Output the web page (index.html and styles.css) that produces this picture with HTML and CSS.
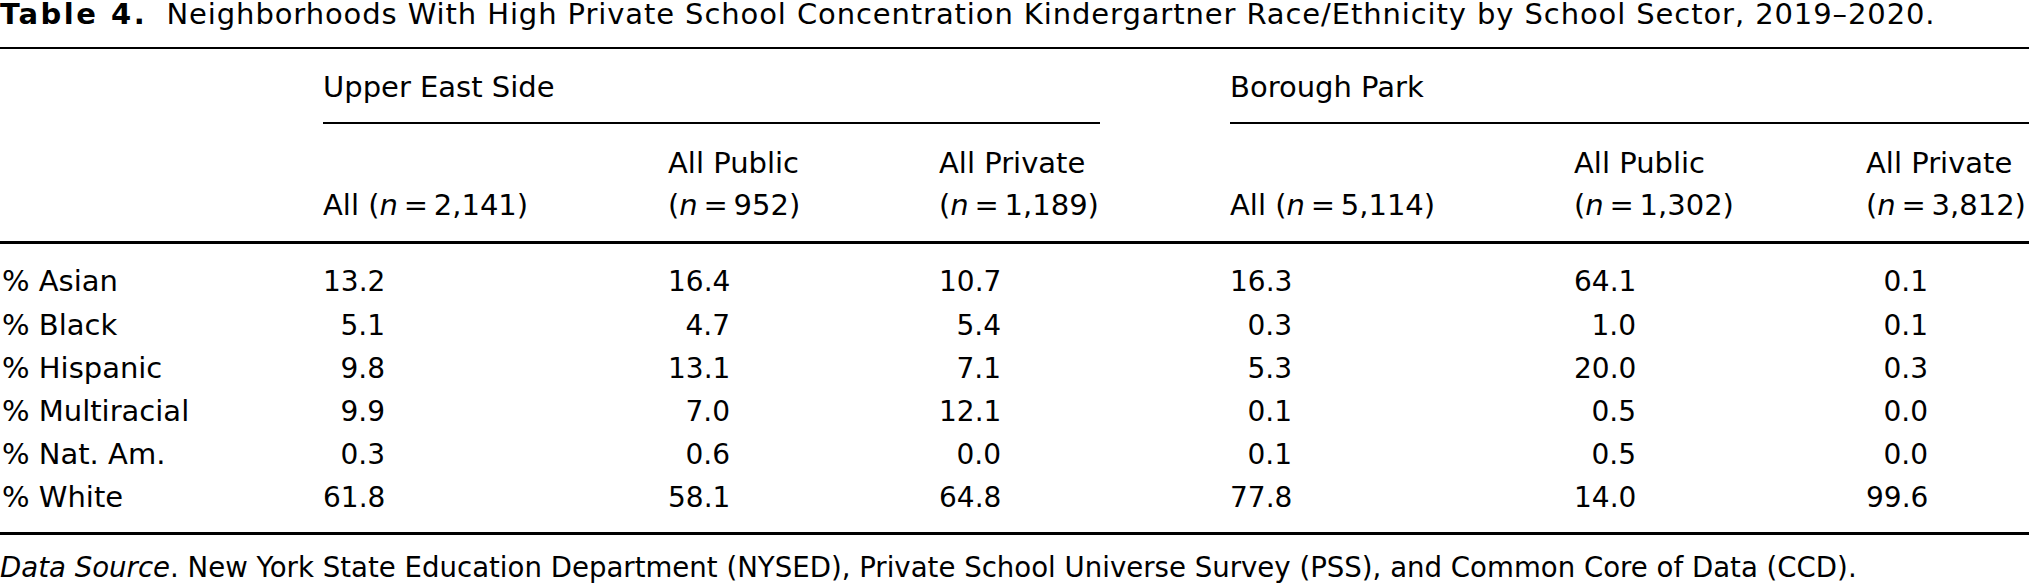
FILE: index.html
```html
<!DOCTYPE html>
<html lang="en">
<head>
<meta charset="utf-8">
<title>Table 4</title>
<link rel="stylesheet" href="styles.css">
</head>
<body>
<div class="page">
  <p class="caption"><b class="caption-label">Table 4.</b> <span class="caption-text">Neighborhoods With High Private School Concentration Kindergartner Race/Ethnicity by School Sector, 2019–2020.</span></p>
  <div class="tbl">
    <div class="thead">
      <div class="grid group-row">
        <div class="cell label"></div>
        <div class="cell span3"><div class="grp grp-ues">Upper East Side</div></div>
        <div class="cell span3"><div class="grp">Borough Park</div></div>
      </div>
      <div class="grid sub-row">
        <div class="cell label"></div>
        <div class="cell sub">All (<i>n</i>&#8201;=&#8201;2,141)</div>
        <div class="cell sub">All Public<br>(<i>n</i>&#8201;=&#8201;952)</div>
        <div class="cell sub">All Private<br>(<i>n</i>&#8201;=&#8201;1,189)</div>
        <div class="cell sub">All (<i>n</i>&#8201;=&#8201;5,114)</div>
        <div class="cell sub">All Public<br>(<i>n</i>&#8201;=&#8201;1,302)</div>
        <div class="cell sub">All Private<br>(<i>n</i>&#8201;=&#8201;3,812)</div>
      </div>
    </div>
    <div class="tbody">
      <div class="grid row">
        <div class="cell label">% Asian</div>
        <div class="cell"><span class="num">13.2</span></div>
        <div class="cell"><span class="num">16.4</span></div>
        <div class="cell"><span class="num">10.7</span></div>
        <div class="cell"><span class="num">16.3</span></div>
        <div class="cell"><span class="num">64.1</span></div>
        <div class="cell"><span class="num">0.1</span></div>
      </div>
      <div class="grid row">
        <div class="cell label">% Black</div>
        <div class="cell"><span class="num">5.1</span></div>
        <div class="cell"><span class="num">4.7</span></div>
        <div class="cell"><span class="num">5.4</span></div>
        <div class="cell"><span class="num">0.3</span></div>
        <div class="cell"><span class="num">1.0</span></div>
        <div class="cell"><span class="num">0.1</span></div>
      </div>
      <div class="grid row">
        <div class="cell label">% Hispanic</div>
        <div class="cell"><span class="num">9.8</span></div>
        <div class="cell"><span class="num">13.1</span></div>
        <div class="cell"><span class="num">7.1</span></div>
        <div class="cell"><span class="num">5.3</span></div>
        <div class="cell"><span class="num">20.0</span></div>
        <div class="cell"><span class="num">0.3</span></div>
      </div>
      <div class="grid row">
        <div class="cell label">% Multiracial</div>
        <div class="cell"><span class="num">9.9</span></div>
        <div class="cell"><span class="num">7.0</span></div>
        <div class="cell"><span class="num">12.1</span></div>
        <div class="cell"><span class="num">0.1</span></div>
        <div class="cell"><span class="num">0.5</span></div>
        <div class="cell"><span class="num">0.0</span></div>
      </div>
      <div class="grid row">
        <div class="cell label">% Nat. Am.</div>
        <div class="cell"><span class="num">0.3</span></div>
        <div class="cell"><span class="num">0.6</span></div>
        <div class="cell"><span class="num">0.0</span></div>
        <div class="cell"><span class="num">0.1</span></div>
        <div class="cell"><span class="num">0.5</span></div>
        <div class="cell"><span class="num">0.0</span></div>
      </div>
      <div class="grid row">
        <div class="cell label">% White</div>
        <div class="cell"><span class="num">61.8</span></div>
        <div class="cell"><span class="num">58.1</span></div>
        <div class="cell"><span class="num">64.8</span></div>
        <div class="cell"><span class="num">77.8</span></div>
        <div class="cell"><span class="num">14.0</span></div>
        <div class="cell"><span class="num">99.6</span></div>
      </div>
    </div>
  </div>
  <p class="source"><i>Data Source</i>. New York State Education Department (NYSED), Private School Universe Survey (PSS), and Common Core of Data (CCD).</p>
</div>
</body>
</html>
```
FILE: styles.css
```css
html, body {
  margin: 0;
  padding: 0;
  background: #fff;
}

body {
  color: #000;
  font-family: "DejaVu Sans", "Liberation Sans", sans-serif;
  overflow: hidden;
}

.page {
  width: 2029px;
  height: 588px;
}

.caption {
  margin: 0;
  height: 47px;
  font-size: 29px;
  line-height: 28px;
  white-space: nowrap;
}

.caption-label {
  font-weight: 700;
  letter-spacing: 2.5px;
  margin-right: 10px;
}

.caption-text {
  letter-spacing: 0.9px;
}

.tbl {
  font-size: 29px;
}

.grid {
  display: grid;
  grid-template-columns: 323px 345px 271px 291px 344px 292px 163px;
}

.cell {
  white-space: nowrap;
}

.label {
  padding-left: 2px;
}

.span3 {
  grid-column: span 3;
}

.thead {
  border-top: 2px solid #000;
  border-bottom: 3px solid #000;
}

.group-row {
  padding-top: 17px;
  line-height: 42px;
}

.grp {
  padding-bottom: 14px;
  border-bottom: 2px solid #000;
}

.grp-ues {
  margin-right: 130px;
}

.sub-row {
  padding-top: 18px;
  padding-bottom: 15px;
  line-height: 42px;
  align-items: end;
}

.tbody {
  padding-top: 16.4px;
  padding-bottom: 12.4px;
  border-bottom: 3px solid #000;
}

.row {
  line-height: 43.2px;
}

.num {
  display: inline-block;
  width: 62px;
  text-align: right;
  font-size: 28px;
}

.source {
  margin: 0;
  padding-top: 18.8px;
  font-size: 27.6px;
  line-height: 28px;
  white-space: nowrap;
}
```
